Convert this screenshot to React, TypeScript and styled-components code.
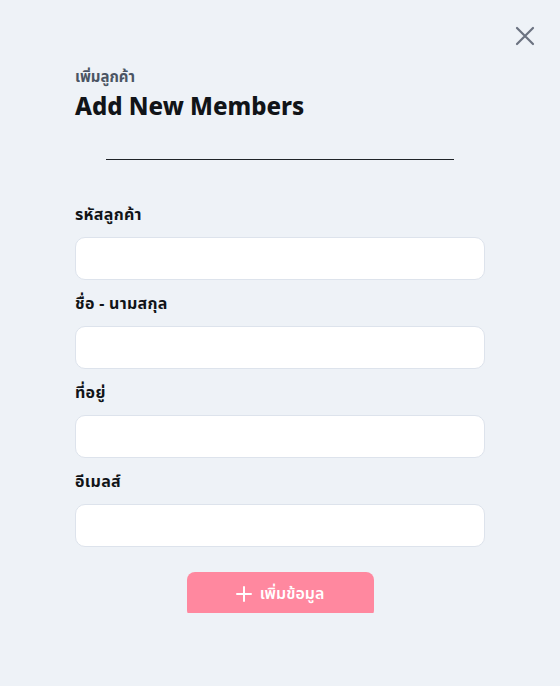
import React from "react";
import styled, { createGlobalStyle } from "styled-components";

const Global = createGlobalStyle`
  html, body { margin: 0; padding: 0; background: #eef2f7; }
  body { font-family: "Noto Sans", "Noto Sans Thai", sans-serif; }
  * { box-sizing: border-box; }
`;

const Page = styled.div`
  position: relative;
  width: 560px;
  height: 686px;
  background: #eef2f7;
  overflow: hidden;
`;

const CloseButton = styled.button`
  position: absolute;
  top: 24px;
  right: 23px;
  width: 24px;
  height: 24px;
  padding: 0;
  border: none;
  background: transparent;
  color: #6b7280;
  cursor: pointer;
`;

const Body = styled.div`
  height: 613px;
  overflow: hidden;
  padding: 66px 75px 0 75px;
  display: flex;
  flex-direction: column;
`;

const Subtitle = styled.div`
  font-size: 15px;
  font-weight: 700;
  color: #4b5563;
  line-height: 20px;
`;

const Title = styled.h1`
  margin: 2px 0 0 0;
  font-size: 24px;
  font-weight: 800;
  color: #111418;
  line-height: 36px;
`;

const Divider = styled.hr`
  margin: 35px 31px 0 31px;
  border: none;
  border-top: 1px solid #1f2328;
  height: 0;
`;

const Form = styled.div`
  margin-top: 43px;
  display: flex;
  flex-direction: column;
  gap: 12px;
`;

const Field = styled.div`
  display: flex;
  flex-direction: column;
  gap: 12px;
`;

const Label = styled.label`
  font-size: 16px;
  font-weight: 700;
  color: #111418;
  line-height: 22px;
  letter-spacing: 0.3px;
`;

const Input = styled.input`
  width: 410px;
  height: 43px;
  border: 1px solid #dde3ec;
  border-radius: 10px;
  background: #ffffff;
  outline: none;
  padding: 0 14px;
  font-size: 15px;
`;

const Actions = styled.div`
  display: flex;
  justify-content: center;
  margin-top: 25px;
`;

const SubmitButton = styled.button`
  flex-shrink: 0;
  width: 187px;
  height: 46px;
  border: none;
  border-radius: 8px;
  background: #ff889f;
  color: #ffffff;
  font-family: inherit;
  font-size: 16px;
  font-weight: 600;
  display: flex;
  align-items: flex-start;
  justify-content: center;
  gap: 8px;
  padding-top: 10px;
`;

const PlusIcon = styled.svg`
  margin-top: 4px;
`;

const fields = ["รหัสลูกค้า", "ชื่อ - นามสกุล", "ที่อยู่", "อีเมลส์"];

export default function App() {
  return (
    <Page>
      <Global />
      <CloseButton aria-label="close">
        <svg width="24" height="24" viewBox="0 0 24 24" fill="none" stroke="currentColor" strokeWidth="2.2" strokeLinecap="round">
          <path d="M4 4 L20 20 M20 4 L4 20" />
        </svg>
      </CloseButton>
      <Body>
        <Subtitle>เพิ่มลูกค้า</Subtitle>
        <Title>Add New Members</Title>
        <Divider />
        <Form>
          {fields.map((f) => (
            <Field key={f}>
              <Label>{f}</Label>
              <Input />
            </Field>
          ))}
        </Form>
        <Actions>
          <SubmitButton>
            <PlusIcon width="16" height="16" viewBox="0 0 16 16" stroke="currentColor" strokeWidth="2" strokeLinecap="round">
              <path d="M8 1 V15 M1 8 H15" />
            </PlusIcon>
            เพิ่มข้อมูล
          </SubmitButton>
        </Actions>
      </Body>
    </Page>
  );
}
